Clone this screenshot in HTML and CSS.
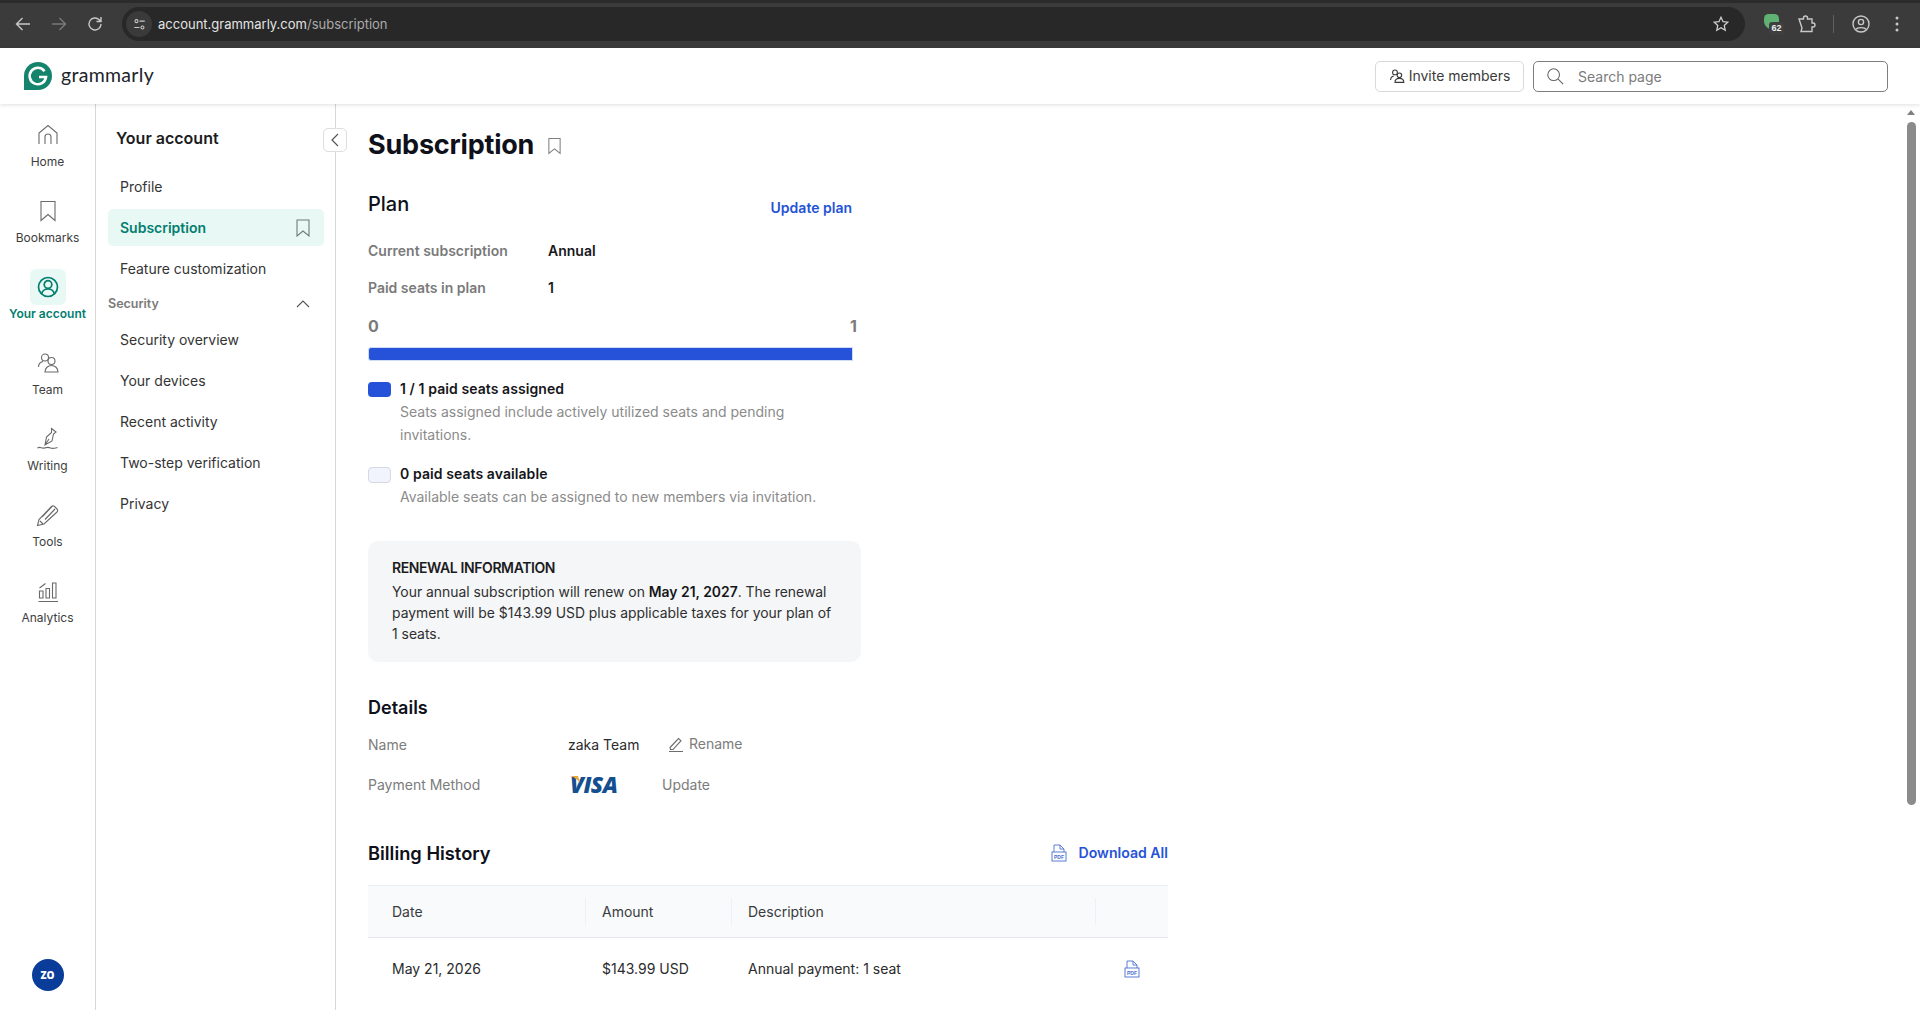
FILE: index.html
```html
<!DOCTYPE html>
<html lang="en">
<head>
<meta charset="utf-8">
<title>Subscription</title>
<link rel="stylesheet" href="styles.css">
</head>
<body>
<div class="chrome">
  <svg class="ci ci-first" viewBox="0 0 20 20"><path d="M17 10H4M9.500 4 3.500 10l6 6"/></svg>
  <svg class="ci ci-dim" viewBox="0 0 20 20"><path d="M3 10h13M10.500 4l6 6-6 6"/></svg>
  <svg class="ci" viewBox="0 0 20 20"><path d="M16 10a6 6 0 1 1-1.800-4.300L16 7.500M16 3v4.500h-4.500"/></svg>
  <div class="omni">
    <span class="site"><svg viewBox="0 0 20 20"><circle cx="6" cy="5.500" r="2"/><path d="M10 5.500h7M3 14h7"/><circle cx="14" cy="14" r="2"/></svg></span>
    <span class="url">account.grammarly.com<span class="url-path">/subscription</span></span>
    <svg class="ci star" viewBox="0 0 20 20"><path d="m10 2.500 2.300 4.900 5.200.6-3.900 3.600 1.100 5.300L10 14.200l-4.700 2.700 1.100-5.300L2.500 8l5.200-.6z"/></svg>
  </div>
  <span class="ext"><span class="ext-badge">62</span></span>
  <svg class="ci puzzle" viewBox="0 0 20 20"><path d="M3 5h4.500V4a2 2 0 0 1 4 0v1H16v4h1a2 2 0 0 1 0 4h-1v4.500H5l1-3.500L3 5z"/></svg>
  <span class="cdiv"></span>
  <svg class="ci prof" viewBox="0 0 20 20"><circle cx="10" cy="10" r="8"/><circle cx="10" cy="8" r="2.600"/><path d="M4.800 15.500c1.500-2.500 8.900-2.500 10.400 0"/></svg>
  <svg class="dots" viewBox="0 0 4 16"><circle cx="2" cy="2" r="1.500"/><circle cx="2" cy="8" r="1.500"/><circle cx="2" cy="14" r="1.500"/></svg>
</div>

<header class="top">
  <svg class="logo" viewBox="0 0 28 28"><path d="M14 0a14 14 0 1 1 0 28H0V14A14 14 0 0 1 14 0z" fill="#15846c"/><path d="M20.500 9.200A8.200 8.200 0 1 0 22 15h-7" fill="none" stroke="#fff" stroke-width="2.600"/></svg>
  <span class="brand">grammarly</span>
  <button class="invite"><svg class="i16" viewBox="0 0 20 20"><circle cx="7.500" cy="5.500" r="3"/><circle cx="13" cy="9" r="2.800"/><path d="M2 15c0-3 2-4.500 4-5M7.500 18c0-3.500 2.500-5 5.500-5s5.500 1.500 5.500 5z"/></svg><span>Invite members</span></button>
  <div class="search"><svg class="i18" viewBox="0 0 20 20"><circle cx="8.500" cy="8.500" r="6.500"/><path d="m13.500 13.500 5.500 5.500"/></svg><span>Search page</span></div>
</header>

<div class="shell">
  <nav class="rail">
    <a class="ri"><span class="rb"><svg viewBox="0 0 24 24"><path d="M3 21V10l9-7.500 9 7.500v11M9 21v-7a3 3 0 0 1 6 0v7"/></svg></span>Home</a>
    <a class="ri"><span class="rb"><svg viewBox="0 0 24 24"><path d="M5 2.500h14v19l-7-6-7 6z"/></svg></span>Bookmarks</a>
    <a class="ri ri-on"><span class="rb"><svg viewBox="0 0 24 24"><circle cx="12" cy="12" r="9.500"/><circle cx="12" cy="9.500" r="3.800"/><path d="M5.500 19c1-4 4-5 6.500-5s5.500 1 6.500 5"/></svg></span>Your account</a>
    <a class="ri"><span class="rb"><svg viewBox="0 0 24 24"><circle cx="9" cy="6.500" r="3.500"/><circle cx="15.500" cy="10" r="3.500"/><path d="M2.500 16c0-3 2.500-5 4.500-5.500M9 21c0-4 3-6.500 6.500-6.500S22 17 22 21z"/></svg></span>Team</a>
    <a class="ri"><span class="rb"><svg viewBox="0 0 24 24"><path d="m15.500 1.500 4.500 3.500-2.500 2-1.500 7-7 4 1.500-8 5-4.500zM9 18l4-6M1.500 21c3-2 4 1 7 0s4-1 6 0 5 0 7-.5"/></svg></span>Writing</a>
    <a class="ri"><span class="rb"><svg viewBox="0 0 24 24"><path d="M1.500 22.500 3 16.500 15.500 3.500a2 2 0 0 1 3 0L21 6a2 2 0 0 1 0 3L8 21zM6.500 13.500 16.500 3M9 16.500 19 6M4 18l3 3"/></svg></span>Tools</a>
    <a class="ri"><span class="rb"><svg viewBox="0 0 24 24"><path d="M3.500 12H7v7H3.500zM10 9.500h3.500V19H10zM16.500 4H20v15h-3.500zM2.500 22.500H22M3.500 9l6-4.500"/></svg></span>Analytics</a>
    <span class="avatar">ZO</span>
  </nav>

  <aside class="side">
    <button class="collapse"><svg viewBox="0 0 12 16"><path d="M9 2 3 8l6 6"/></svg></button>
    <h2 class="side-h">Your account</h2>
    <a class="si">Profile</a>
    <a class="si si-on">Subscription<svg class="bm" viewBox="0 0 16 18"><path d="M2 1h12v16l-6-5-6 5z"/></svg></a>
    <a class="si">Feature customization</a>
    <div class="sec">Security<svg viewBox="0 0 16 10"><path d="m2 8 6-6 6 6"/></svg></div>
    <a class="si">Security overview</a>
    <a class="si">Your devices</a>
    <a class="si">Recent activity</a>
    <a class="si">Two-step verification</a>
    <a class="si">Privacy</a>
  </aside>

  <main class="main">
    <div class="title-row"><h1>Subscription</h1><svg class="bm-big" viewBox="0 0 16 18"><path d="M2 1h12v16l-6-5-6 5z"/></svg></div>

    <section class="plan">
      <div class="plan-h"><h2>Plan</h2><a class="link">Update plan</a></div>
      <dl class="kv kv-first"><dt>Current subscription</dt><dd>Annual</dd></dl>
      <dl class="kv"><dt>Paid seats in plan</dt><dd>1</dd></dl>
      <div class="scale"><span>0</span><span>1</span></div>
      <div class="bar"></div>
      <div class="lg lg-first">
        <span class="sw sw-on"></span>
        <div><b>1 / 1 paid seats assigned</b><p class="p-wrap">Seats assigned include actively utilized seats and pending invitations.</p></div>
      </div>
      <div class="lg">
        <span class="sw sw-off"></span>
        <div><b>0 paid seats available</b><p class="p-tight">Available seats can be assigned to new members via invitation.</p></div>
      </div>
    </section>

    <section class="renew">
      <h3>RENEWAL INFORMATION</h3>
      <p>Your annual subscription will renew on <b>May 21, 2027</b>. The renewal payment will be $143.99 USD plus applicable taxes for your plan of 1 seats.</p>
    </section>

    <h2 class="h-details">Details</h2>
    <div class="dr dr-first"><span class="dl">Name</span><span class="dv">zaka Team</span>
      <a class="act act-rename"><svg viewBox="0 0 16 16"><path d="M2 11.500 10.500 2.500l2.500 2.200L5 13.500H2.500zM1 15.500h14"/></svg>Rename</a></div>
    <div class="dr"><span class="dl">Payment Method</span><span class="visa"><svg viewBox="0 0 10 8"><path d="M0 0h8l2 7C8 4 4 1 0 0z"/></svg>VISA</span><a class="act act-update">Update</a></div>

    <div class="bill-h"><h2>Billing History</h2><a class="link dl-all"><svg class="pdf" viewBox="0 0 16 18"><path d="M3 8V1h6l4 4v3M9 1v4h4"/><rect x="1" y="8" width="14" height="9"/><text x="8" y="15" text-anchor="middle">PDF</text></svg>Download All</a></div>
    <div class="tbl">
      <div class="tr th"><span class="c1">Date</span><span class="c2">Amount</span><span class="c3">Description</span><span class="c4"></span></div>
      <div class="tr td"><span class="c1">May 21, 2026</span><span class="c2">$143.99 USD</span><span class="c3">Annual payment: 1 seat</span><span class="c4"><svg class="pdf" viewBox="0 0 16 18"><path d="M3 8V1h6l4 4v3M9 1v4h4"/><rect x="1" y="8" width="14" height="9"/><text x="8" y="15" text-anchor="middle">PDF</text></svg></span></div>
    </div>
  </main>

  <div class="sb"><i class="sb-up"></i><i class="sb-th"></i></div>
</div>
</body>
</html>
```
FILE: styles.css
```css
* { box-sizing: border-box; }
html, body { height: 100%; }
body {
  margin: 0;
  width: 1920px;
  height: 1010px;
  overflow: hidden;
  display: flex;
  flex-direction: column;
  background: #fff;
  color: #1c1c1e;
  font: 14px/20px Inter, "Liberation Sans", sans-serif;
}
h1, h2, h3, p, dl, dd { margin: 0; }
a { color: inherit; text-decoration: none; }
svg { display: block; fill: none; stroke: currentColor; stroke-width: 1.400; flex: none; }

/* browser chrome */
.chrome {
  height: 48px;
  flex: none;
  display: flex;
  align-items: center;
  background: #3b3b3b;
  border-top: 3px solid #2b2b2b;
  color: #c8c8c8;
  padding-bottom: 3px;
}
.ci { width: 20px; height: 20px; margin-right: 16px; }
.ci-first { margin-left: 13px; }
.ci-dim { color: #7a7a7a; }
.omni {
  width: 1623px;
  height: 34px;
  margin-left: 1px;
  display: flex;
  align-items: center;
  border-radius: 17px;
  background: #282828;
  padding-left: 4px;
}
.site {
  width: 26px;
  height: 26px;
  border-radius: 50%;
  background: #3a3a3a;
  display: flex;
  align-items: center;
  justify-content: center;
  margin-right: 6px;
}
.site svg { width: 15px; height: 15px; }
.url { font-size: 13px; color: #e4e4e4; flex: 1; }
.url-path { color: #ababab; }
.star { width: 18px; height: 18px; margin-right: 15px; color: #d0d0d0; }
.ext {
  position: relative;
  width: 15px;
  height: 15px;
  margin-left: 19px;
  margin-top: -6px;
  border-radius: 5px 5px 8px 8px;
  background: #5fb274;
}
.ext-badge {
  position: absolute;
  left: 5px;
  top: 8px;
  width: 15px;
  height: 13px;
  border-radius: 3px;
  background: #3f3f3f;
  color: #f0f0f0;
  font: 700 9px/13px "Liberation Sans", sans-serif;
  text-align: center;
}
.puzzle { margin-left: 17px; margin-right: 0; }
.cdiv { width: 1px; height: 18px; background: #5f5f5f; margin-left: 17px; margin-right: 17px; }
.prof { margin-right: 0; }
.dots { width: 4px; height: 16px; margin-left: 24px; fill: #c8c8c8; stroke: none; }

/* top header */
.top {
  height: 56px;
  flex: none;
  display: flex;
  align-items: center;
  padding: 0 32px 0 24px;
  position: relative;
  z-index: 2;
  background: #fff;
  box-shadow: 0 1px 4px rgba(0, 0, 0, .13);
}
.logo { width: 28px; height: 28px; stroke: none; }
.brand {
  margin-left: 9px;
  margin-right: auto;
  margin-bottom: 2px;
  font: 400 19.500px/28px Lato, "Open Sans", sans-serif;
  letter-spacing: .3px;
  color: #20242a;
}
.invite {
  width: 149px;
  height: 31px;
  display: flex;
  align-items: center;
  justify-content: center;
  gap: 4px;
  border: 1px solid #d9d9d9;
  border-radius: 5px;
  background: #fff;
  color: #3b3b3b;
  font: 14px Inter, sans-serif;
  padding: 0 0 1px;
}
.i16 { width: 16px; height: 16px; }
.search {
  width: 355px;
  height: 31px;
  margin-left: 9px;
  display: flex;
  align-items: center;
  gap: 14px;
  padding-left: 12px;
  border: 1px solid #7d7d7d;
  border-radius: 5px;
  color: #7b7b7b;
}
.search span { padding-top: 1px; }
.search svg { color: #666; }
.i18 { width: 18px; height: 18px; stroke-width: 1.200; }

/* shell */
.shell { flex: 1; min-height: 0; display: flex; position: relative; }

.rail {
  width: 96px;
  flex: none;
  border-right: 1px solid #d6d6d6;
  padding-top: 13px;
  display: flex;
  flex-direction: column;
  align-items: center;
  color: #3d3d3d;
}
.ri {
  height: 76px;
  width: 100%;
  display: flex;
  flex-direction: column;
  align-items: center;
  font-size: 12px;
  line-height: 16px;
  white-space: nowrap;
}
.rb {
  width: 36px;
  height: 36px;
  border-radius: 6px;
  display: flex;
  align-items: center;
  justify-content: center;
  margin-bottom: 1px;
  color: #6a6a6a;
}
.rb svg { width: 24px; height: 24px; stroke-width: 1.100; }
.ri-on { color: #027e6f; font-weight: 600; }
.ri-on .rb { background: #e8f8f5; color: #027e6f; }
.ri-on .rb svg { stroke-width: 1.700; }
.avatar {
  margin-top: auto;
  margin-bottom: 19px;
  width: 32px;
  height: 32px;
  border-radius: 50%;
  background: #0a3d9a;
  color: #fff;
  font: 800 10px/32px "Open Sans", sans-serif;
  text-align: center;
}

.side {
  width: 240px;
  flex: none;
  position: relative;
  border-right: 1px solid #d6d6d6;
  padding: 23px 11px 0 12px;
}
.collapse {
  position: absolute;
  top: 24px;
  right: -12px;
  width: 24px;
  height: 24px;
  padding: 0;
  border: 1px solid #dedede;
  border-radius: 5px;
  background: #fff;
  color: #555;
  display: flex;
  align-items: center;
  justify-content: center;
}
.collapse svg { width: 12px; height: 16px; stroke-width: 1.200; }
.side-h { font-size: 16px; line-height: 22px; font-weight: 600; padding-left: 8px; margin-bottom: 19px; }
.si {
  height: 37px;
  margin-bottom: 4px;
  display: flex;
  align-items: center;
  justify-content: space-between;
  padding: 0 13px 0 12px;
  border-radius: 5px;
  color: #343434;
}
.si-on { background: #e8f8f5; color: #027e6f; font-weight: 600; }
.bm { width: 16px; height: 18px; color: #6f7b79; stroke-width: 1.100; }
.sec {
  display: flex;
  align-items: center;
  justify-content: space-between;
  height: 20px;
  margin: 7px 13px 7px 0;
  font-size: 12.500px;
  font-weight: 600;
  color: #7a7a7a;
}
.sec svg { width: 16px; height: 10px; color: #555; stroke-width: 1.100; }

/* main */
.main { flex: 1; min-width: 0; padding: 21px 0 0 32px; overflow: hidden; }
.title-row { display: flex; align-items: center; gap: 13px; height: 40px; }
h1 { font-size: 27px; line-height: 40px; font-weight: 700; color: #0e101a; letter-spacing: -.2px; }
.bm-big { width: 15px; height: 18px; margin-top: 2px; color: #7f7f7f; stroke-width: 1.100; }
.plan { width: 484px; }
.plan-h { margin-top: 25px; height: 29px; display: flex; justify-content: space-between; }
.plan-h h2 { font-size: 20px; line-height: 28px; font-weight: 500; color: #0e101a; }
.link { color: #2553d6; font-weight: 600; font-size: 14px; }
.plan-h .link { padding-top: 8px; }
.kv { display: flex; margin-top: 17px; font-weight: 600; }
.kv-first { margin-top: 22px; }
.kv dt { width: 180px; color: #7a7a7a; }
.kv dd { color: #17181c; }
.scale { display: flex; justify-content: space-between; margin-top: 18px; margin-right: -5px; font-size: 16px; font-weight: 700; color: #7a7a7a; }
.bar { height: 14px; margin-top: 11px; margin-right: -1px; background: #2552d8; border: 1px solid #cfdcf8; border-radius: 3px 0 0 3px; }
.lg { display: flex; gap: 9px; margin-top: 18px; width: 495px; margin-right: -11px; }
.lg-first { margin-top: 18px; }
.lg b { display: block; font-weight: 600; color: #15161a; letter-spacing: .08px; }
.lg p { color: #8b8b8b; line-height: 23px; margin-top: 1px; }
.lg p.p-wrap { max-width: 400px; }
.lg p.p-tight { margin-top: 1px; white-space: nowrap; }
.sw { width: 23px; height: 15px; margin-top: 3px; border-radius: 4px; flex: none; }
.sw-on { background: #2552d8; }
.sw-off { background: #f1f4fd; border: 1px solid #d6d9e2; height: 16px; }
.renew {
  width: 493px;
  height: 121px;
  margin-top: 33px;
  padding: 16px 24px 0;
  border-radius: 10px;
  background: #f5f6f7;
}
.renew h3 { font-size: 14px; line-height: 21px; font-weight: 600; color: #1c1c1e; letter-spacing: -.4px; }
.renew p { margin-top: 4px; font-size: 13.900px; line-height: 21px; color: #2f2f31; }
.renew b { font-weight: 600; color: #15161a; }
.h-details { font-size: 18px; line-height: 24px; font-weight: 600; margin-top: 34px; color: #0e101a; }
.dr { display: flex; align-items: center; height: 20px; margin-top: 20px; }
.dr-first { margin-top: 15px; }
.dl { width: 200px; color: #7c7c7c; }
.dv { color: #2b2b2d; width: 100px; }
.act { color: #7c7c7c; display: flex; align-items: center; gap: 5px; margin-top: -2px; }
.act svg { width: 16px; height: 16px; stroke-width: 1.100; color: #6d6d6d; }
.act-update { margin-left: 43px; margin-top: 0; }
.visa {
  position: relative;
  width: 49px;
  margin-left: 2px;
  font: italic 800 22.500px/20px "Open Sans", sans-serif;
  letter-spacing: -.5px;
  color: #14508f;
}
.visa svg { position: absolute; left: 0; top: 1px; width: 10px; height: 8px; stroke: none; fill: #e9a53a; }
.bill-h { width: 800px; height: 24px; margin-top: 46px; display: flex; justify-content: space-between; align-items: center; }
.bill-h h2 { font-size: 18.300px; line-height: 24px; font-weight: 600; color: #0e101a; }
.dl-all { display: flex; align-items: center; gap: 12px; font-size: 14.100px; }
.pdf { width: 16px; height: 18px; color: #4a6fd0; stroke-width: .9; }
.pdf text { font: 700 5px "Liberation Sans", sans-serif; fill: #4a6fd0; stroke: none; }
.tbl { width: 800px; margin-top: 20px; }
.tr { display: grid; grid-template-columns: 218px 146px 364px 72px; align-items: center; }
.tr > span { padding-left: 16px; }
.tr > .c1 { padding-left: 24px; }
.th { height: 53px; background: #f8fafc; border-top: 1px solid #eceef1; border-bottom: 1px solid #e6e8ec; color: #3a3a3c; }
.th > span { height: 27px; line-height: 27px; border-right: 1px solid #eef0f3; }
.th > .c4 { border-right: 0; }
.td { height: 62px; color: #2b2b2d; }
.td .c4 svg { margin-left: 12px; }

/* page scrollbar */
.sb { width: 16px; flex: none; display: flex; flex-direction: column; align-items: center; padding: 6px 2px 0 0; }
.sb-up { width: 0; height: 0; border: 4px solid transparent; border-top: 0; border-bottom: 5px solid #7f7f7f; }
.sb-th { width: 9px; height: 683px; margin-top: 7px; border-radius: 5px; background: #8b8b8b; }
```
